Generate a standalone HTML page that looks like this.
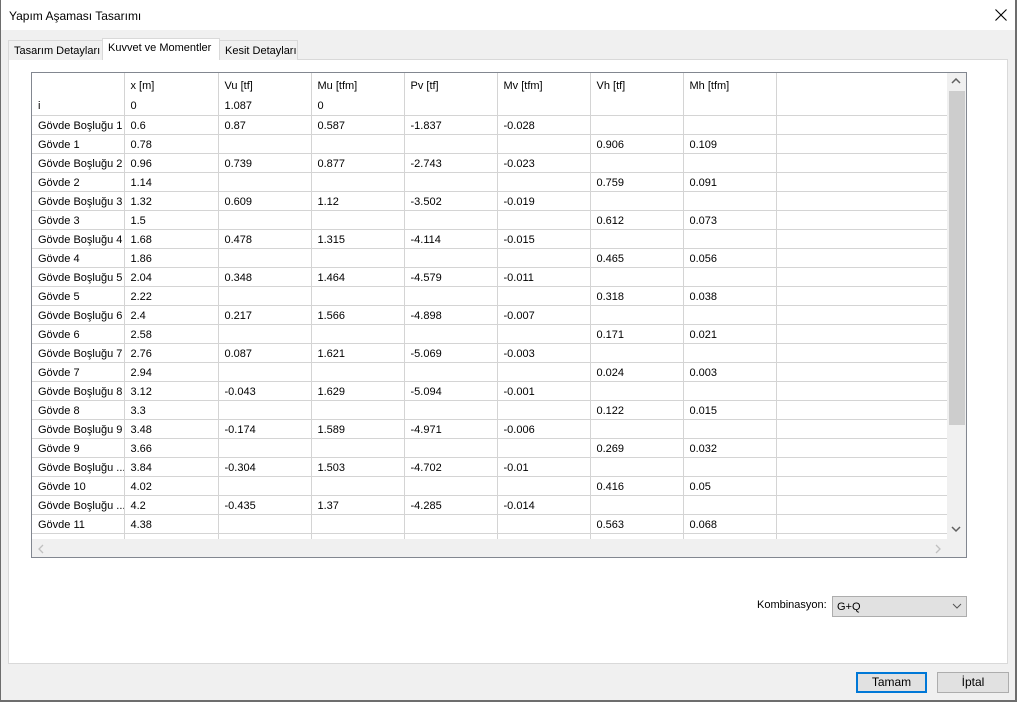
<!DOCTYPE html>
<html><head><meta charset="utf-8"><style>
*{margin:0;padding:0;box-sizing:border-box}
body{width:1017px;height:702px;background:#f0f0f0;font-family:"Liberation Sans",sans-serif;font-size:11px;color:#000;position:relative;overflow:hidden}
.a{position:absolute;white-space:nowrap}
#title{left:0;top:0;width:1017px;height:30px;background:#fff}
#wl{left:0;top:0;width:1px;height:702px;background:#6d6d6d}
#wr{left:1015px;top:0;width:2px;height:702px;background:#6d6d6d}
#wb{left:0;top:700px;width:1017px;height:2px;background:#6d6d6d}
.tab{top:40px;height:20px;background:#f0f0f0;border:1px solid #d9d9d9;border-bottom:none;padding:4px 0 0 5px;font-size:11px}
#panel{left:8px;top:59px;width:1000px;height:605px;background:#fff;border:1px solid #d9d9d9}
#grid{left:31px;top:72px;width:936px;height:486px;border:1px solid #828790;background:#fff;overflow:hidden}
table{border-collapse:collapse;table-layout:fixed;position:absolute;left:0;top:0;width:944px}
td{height:19px;border-right:1px solid #d4d4d4;border-bottom:1px solid #d4d4d4;padding:2px 0 0 6px;white-space:nowrap;overflow:hidden;font-size:11px;line-height:16px}
tr.h td{height:23px;border-bottom:none}
.btn{top:672px;height:21px;background:#e1e1e1;border:1px solid #adadad;text-align:center;line-height:19px;font-size:12px}
</style></head><body>
<div class="a" id="title"></div>
<div class="a" style="left:9px;top:9px;font-size:12px">Yapım Aşaması Tasarımı</div>
<svg class="a" style="left:995px;top:9px" width="12" height="12"><path d="M0.5 0.5 L11.5 11.5 M11.5 0.5 L0.5 11.5" stroke="#000" stroke-width="1.1"/></svg>
<div class="a" id="panel"></div>
<div class="a tab" style="left:8px;width:95px">Tasarım Detayları</div>
<div class="a tab" style="left:102px;width:118px;top:38px;height:22px;background:#fff;z-index:2;padding-top:3px">Kuvvet ve Momentler</div>
<div class="a tab" style="left:219px;width:79px">Kesit Detayları</div>
<div class="a" id="grid">
<table>
<colgroup><col style="width:92px"><col style="width:94px"><col style="width:93px"><col style="width:93px"><col style="width:93px"><col style="width:93px"><col style="width:93px"><col style="width:93px"><col style="width:200px"></colgroup>
<tr class="h"><td></td><td>x [m]</td><td>Vu [tf]</td><td>Mu [tfm]</td><td>Pv [tf]</td><td>Mv [tfm]</td><td>Vh [tf]</td><td>Mh [tfm]</td><td></td></tr>
<tr><td>i</td><td>0</td><td>1.087</td><td>0</td><td></td><td></td><td></td><td></td><td></td></tr>
<tr><td>Gövde Boşluğu 1</td><td>0.6</td><td>0.87</td><td>0.587</td><td>-1.837</td><td>-0.028</td><td></td><td></td><td></td></tr>
<tr><td>Gövde 1</td><td>0.78</td><td></td><td></td><td></td><td></td><td>0.906</td><td>0.109</td><td></td></tr>
<tr><td>Gövde Boşluğu 2</td><td>0.96</td><td>0.739</td><td>0.877</td><td>-2.743</td><td>-0.023</td><td></td><td></td><td></td></tr>
<tr><td>Gövde 2</td><td>1.14</td><td></td><td></td><td></td><td></td><td>0.759</td><td>0.091</td><td></td></tr>
<tr><td>Gövde Boşluğu 3</td><td>1.32</td><td>0.609</td><td>1.12</td><td>-3.502</td><td>-0.019</td><td></td><td></td><td></td></tr>
<tr><td>Gövde 3</td><td>1.5</td><td></td><td></td><td></td><td></td><td>0.612</td><td>0.073</td><td></td></tr>
<tr><td>Gövde Boşluğu 4</td><td>1.68</td><td>0.478</td><td>1.315</td><td>-4.114</td><td>-0.015</td><td></td><td></td><td></td></tr>
<tr><td>Gövde 4</td><td>1.86</td><td></td><td></td><td></td><td></td><td>0.465</td><td>0.056</td><td></td></tr>
<tr><td>Gövde Boşluğu 5</td><td>2.04</td><td>0.348</td><td>1.464</td><td>-4.579</td><td>-0.011</td><td></td><td></td><td></td></tr>
<tr><td>Gövde 5</td><td>2.22</td><td></td><td></td><td></td><td></td><td>0.318</td><td>0.038</td><td></td></tr>
<tr><td>Gövde Boşluğu 6</td><td>2.4</td><td>0.217</td><td>1.566</td><td>-4.898</td><td>-0.007</td><td></td><td></td><td></td></tr>
<tr><td>Gövde 6</td><td>2.58</td><td></td><td></td><td></td><td></td><td>0.171</td><td>0.021</td><td></td></tr>
<tr><td>Gövde Boşluğu 7</td><td>2.76</td><td>0.087</td><td>1.621</td><td>-5.069</td><td>-0.003</td><td></td><td></td><td></td></tr>
<tr><td>Gövde 7</td><td>2.94</td><td></td><td></td><td></td><td></td><td>0.024</td><td>0.003</td><td></td></tr>
<tr><td>Gövde Boşluğu 8</td><td>3.12</td><td>-0.043</td><td>1.629</td><td>-5.094</td><td>-0.001</td><td></td><td></td><td></td></tr>
<tr><td>Gövde 8</td><td>3.3</td><td></td><td></td><td></td><td></td><td>0.122</td><td>0.015</td><td></td></tr>
<tr><td>Gövde Boşluğu 9</td><td>3.48</td><td>-0.174</td><td>1.589</td><td>-4.971</td><td>-0.006</td><td></td><td></td><td></td></tr>
<tr><td>Gövde 9</td><td>3.66</td><td></td><td></td><td></td><td></td><td>0.269</td><td>0.032</td><td></td></tr>
<tr><td>Gövde Boşluğu ...</td><td>3.84</td><td>-0.304</td><td>1.503</td><td>-4.702</td><td>-0.01</td><td></td><td></td><td></td></tr>
<tr><td>Gövde 10</td><td>4.02</td><td></td><td></td><td></td><td></td><td>0.416</td><td>0.05</td><td></td></tr>
<tr><td>Gövde Boşluğu ...</td><td>4.2</td><td>-0.435</td><td>1.37</td><td>-4.285</td><td>-0.014</td><td></td><td></td><td></td></tr>
<tr><td>Gövde 11</td><td>4.38</td><td></td><td></td><td></td><td></td><td>0.563</td><td>0.068</td><td></td></tr>
<tr><td></td><td></td><td></td><td></td><td></td><td></td><td></td><td></td><td></td></tr>
</table>
<div class="a" style="left:915px;top:0;width:19px;height:467px;background:#f0f0f0"></div>
<div class="a" style="left:917px;top:18px;width:16px;height:334px;background:#cdcdcd"></div>
<svg class="a" style="left:919px;top:5px" width="10" height="7"><path d="M1 5 L5 1 L9 5" stroke="#606060" stroke-width="1.5" fill="none"/></svg>
<svg class="a" style="left:919px;top:453px" width="10" height="7"><path d="M1 1 L5 5 L9 1" stroke="#606060" stroke-width="1.5" fill="none"/></svg>
<div class="a" style="left:0;top:466px;width:934px;height:19px;background:#f0f0f0"></div>
<svg class="a" style="left:6px;top:471px" width="6" height="10"><path d="M5 1 L1 5 L5 9" stroke="#c0c0c0" stroke-width="1.3" fill="none"/></svg>
<svg class="a" style="left:903px;top:471px" width="6" height="10"><path d="M1 1 L5 5 L1 9" stroke="#c0c0c0" stroke-width="1.3" fill="none"/></svg>
</div>
<div class="a" style="left:757px;top:599px">Kombinasyon:</div>
<div class="a" style="left:832px;top:596px;width:135px;height:21px;background:#e1e1e1;border:1px solid #adadad;padding:4px 0 0 4px">G+Q</div>
<svg class="a" style="left:952px;top:602px" width="10" height="8"><path d="M1 2 L5 6 L9 2" stroke="#555" fill="none"/></svg>
<div class="a btn" style="left:856px;width:71px;border:2px solid #0078d7;line-height:17px">Tamam</div>
<div class="a btn" style="left:937px;width:72px">İptal</div>
<div class="a" id="wl"></div><div class="a" id="wr"></div><div class="a" id="wb"></div>
</body></html>
